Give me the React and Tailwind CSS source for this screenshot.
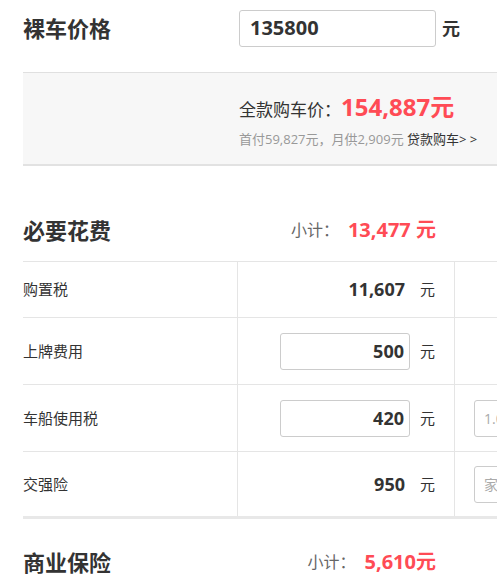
import React from 'react';

const FONT = { fontFamily: '"Open Sans", "Noto Sans CJK SC", sans-serif' };

function Row( { label, height, children, extra, last } ) {
  return (
    <div className={ `flex ${ height } ${ last ? 'border-b-[3px] border-[#e8e8e8]' : 'border-b border-[#e5e5e5]' }` }>
      <div className="w-[214px] shrink-0 flex items-center text-[15px] text-[#333]">{ label }</div>
      <div className="w-[217px] shrink-0 border-l border-[#e5e5e5] flex items-center justify-end pr-[19px]">
        { children }
        <span className="ml-[10px] text-[15px] text-[#333]">元</span>
      </div>
      <div className="flex-1 border-l border-[#e5e5e5] flex items-center pl-[19px]">{ extra }</div>
    </div>
  );
}

function Amount( { value } ) {
  return <span className="mr-[5px] text-[18px] font-bold text-[#333]">{ value }</span>;
}

function NumInput( { value } ) {
  return (
    <div className="w-[130px] h-[37px] border border-[#ccc] rounded-[3px] flex items-center justify-end pr-[5px] text-[18px] font-bold text-[#333] bg-white">
      { value }
    </div>
  );
}

function SideInput( { placeholder } ) {
  return (
    <div className="w-[130px] h-[37px] border border-[#ccc] rounded-[3px] flex items-center pl-[9px] text-[14px] text-[#aaa] bg-white whitespace-nowrap overflow-hidden">
      { placeholder }
    </div>
  );
}

function SectionHead( { title, total, className } ) {
  return (
    <div className={ `flex items-center w-[413px] h-[28px] ${ className }` }>
      <h2 className="text-[22px] font-bold text-[#333]">{ title }</h2>
      <span className="ml-auto text-[16px] text-[#666]">小计：</span>
      <span className="ml-[9px] text-[20px] font-bold text-[#ff4b55]">{ total }</span>
    </div>
  );
}

export default function App() {
  return (
    <div className="w-[497px] h-[582px] overflow-hidden bg-white" style={ FONT }>
      <div className="ml-[23px] w-[620px]">
        {/* bare price */}
        <div className="flex items-center pt-[10px] h-[46px]">
          <h2 className="w-[216px] text-[22px] font-bold text-[#333]">裸车价格</h2>
          <div className="w-[197px] h-[37px] border border-[#ccc] rounded-[3px] flex items-center pl-[10px] text-[20px] font-bold text-[#333]">
            135800
          </div>
          <span className="ml-[6px] text-[18px] font-bold text-[#333]">元</span>
        </div>

        <div className="mt-[26px] h-[94px] bg-[#f7f7f7] border-t border-[#e0e0e0] border-b-2 border-b-[#e2e2e2] pl-[216px] pt-[16px]">
          <div className="flex items-baseline">
            <span className="text-[17px] text-[#333]">全款购车价：</span>
            <span className="text-[24px] font-bold text-[#ff4b55]">154,887元</span>
          </div>
          <div className="mt-[5px] text-[13px] text-[#999] whitespace-nowrap">
            首付59,827元，月供2,909元 <span className="text-[#333]">贷款购车&gt; &gt;</span>
          </div>
        </div>

        {/* necessary costs */}
        <SectionHead title="必要花费" total="13,477 元" className="mt-[50px]" />

        <div className="mt-[17px] border-t border-[#e5e5e5]">
          <Row label="购置税" height="h-[56px]">
            <Amount value="11,607" />
          </Row>
          <Row label="上牌费用" height="h-[67px]">
            <NumInput value="500" />
          </Row>
          <Row label="车船使用税" height="h-[67px]" extra={ <SideInput placeholder="1.0L(含)以下" /> }>
            <NumInput value="420" />
          </Row>
          <Row label="交强险" height="h-[67px]" last extra={ <SideInput placeholder="家用6座以下" /> }>
            <Amount value="950" />
          </Row>
        </div>

        {/* commercial insurance */}
        <SectionHead title="商业保险" total="5,610元" className="mt-[29px]" />
      </div>
    </div>
  );
}
